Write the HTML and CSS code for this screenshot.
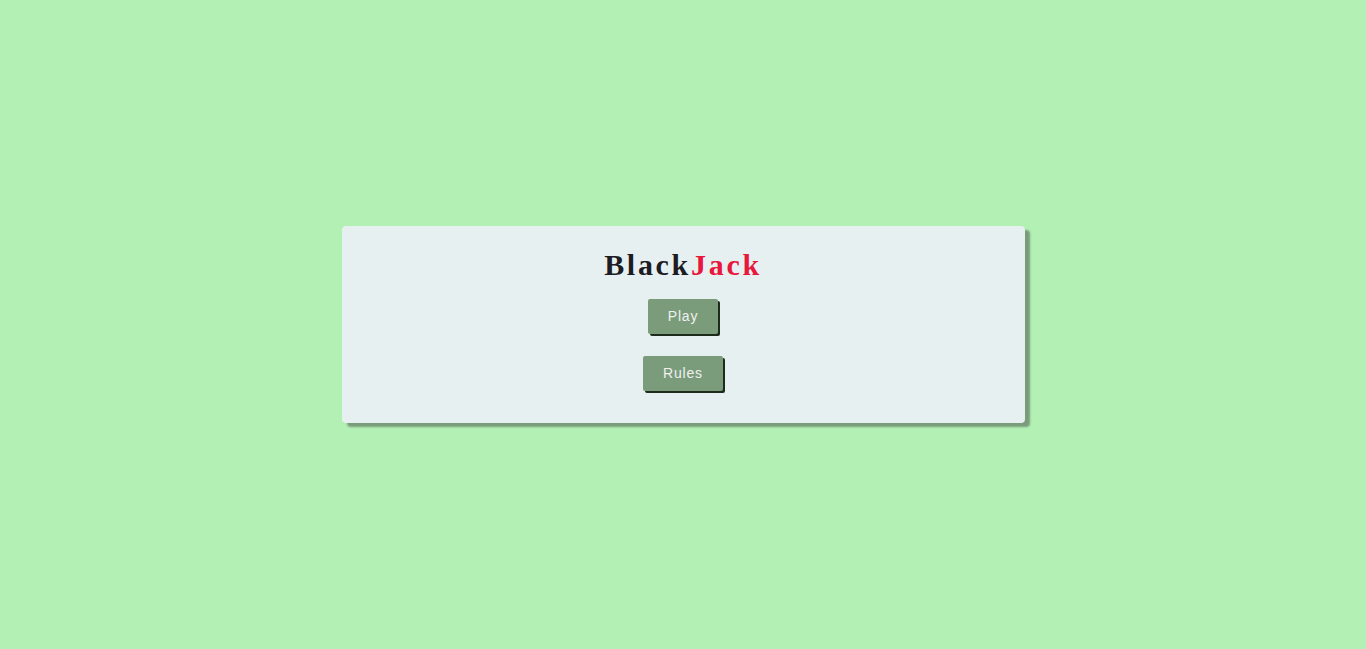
FILE: index.html
```html
<!DOCTYPE html>
<html>
<head>
<meta charset="utf-8">
<link rel="stylesheet" href="styles.css">
</head>
<body>
<div class="page">
  <div class="card">
    <h1 class="title">Black<span class="red">Jack</span></h1>
    <button class="btn">Play</button>
    <button class="btn">Rules</button>
  </div>
</div>
</body>
</html>
```
FILE: styles.css
```css
html, body {
  margin: 0;
  padding: 0;
  height: 100%;
}
body {
  background: #b3f0b4;
}
.page {
  height: 100%;
  display: flex;
  align-items: center;
  justify-content: center;
}
.card {
  width: 50%;
  height: 197px;
  box-sizing: border-box;
  background: #e7f0f1;
  border-radius: 4px;
  box-shadow: 5px 4px 2px #7a9c7b;
  display: flex;
  flex-direction: column;
  align-items: center;
  padding-top: 22px;
}
.title {
  margin: 0 0 17px;
  font-family: "Liberation Serif", "Times New Roman", serif;
  font-weight: bold;
  font-size: 30px;
  line-height: 34px;
  letter-spacing: 2.7px;
  color: #1c1c22;
}
.red {
  color: #e8173c;
}
.btn {
  font-family: "Liberation Sans", Arial, sans-serif;
  font-size: 14px;
  line-height: 15px;
  letter-spacing: 0.8px;
  color: #f0f0f0;
  background: #7a9c7b;
  border: none;
  border-radius: 2px;
  padding: 10px 20px;
  box-shadow: 2px 2px 0 #1c2b1c;
  margin-bottom: 22px;
  cursor: pointer;
}
```
